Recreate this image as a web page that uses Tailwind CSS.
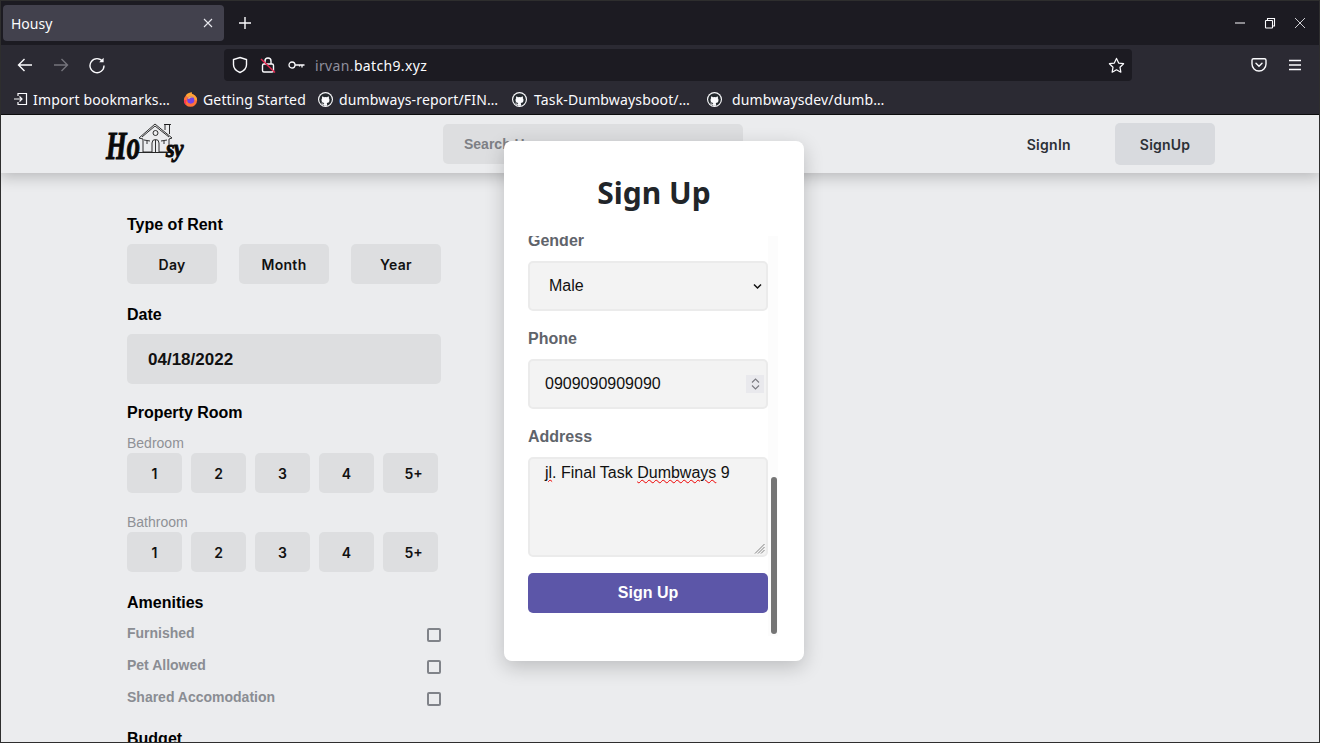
<!DOCTYPE html>
<html lang="en">
<head>
    <meta charset="UTF-8">
    <meta name="viewport" content="width=device-width, initial-scale=1.0">
    <title>Housy</title>
    <script src="https://cdn.jsdelivr.net/npm/@tailwindcss/browser@4"></script>
</head>
<body class="h-screen overflow-hidden bg-[#ebecee] font-['Liberation_Sans',sans-serif]">
    <div class="relative flex h-[743px] w-[1320px] flex-col overflow-hidden">

        <!-- tab bar -->
        <div class="flex h-[45px] shrink-0 items-center bg-[#1c1b22] pl-[3px] pr-[13px] pt-[1px] text-[#fbfbfe] font-['Noto_Sans',sans-serif]">
            <div class="flex h-[36px] w-[221px] items-center justify-between rounded-[4px] bg-[#42414d] pl-[8px] pr-[10px] text-[14px]">
                <span>Housy</span>
                <svg class="h-[12px] w-[12px]" viewBox="0 0 12 12" fill="none" stroke="#e8e8ee" stroke-width="1.1"><path d="M2 2l8 8M10 2l-8 8"/></svg>
            </div>
            <svg class="ml-[14px] h-[14px] w-[14px]" viewBox="0 0 14 14" fill="none" stroke="#fbfbfe" stroke-width="1.4"><path d="M7 1v12M1 7h12"/></svg>
            <div class="ml-auto flex items-center gap-[18px] pr-[1px]">
                <svg class="h-[12px] w-[12px]" viewBox="0 0 12 12" fill="none" stroke="#fbfbfe" stroke-width="1"><path d="M1 6h10"/></svg>
                <svg class="h-[12px] w-[12px]" viewBox="0 0 12 12" fill="none" stroke="#fbfbfe" stroke-width="1.1"><rect x="1.5" y="3.5" width="7" height="7.5" rx="0.6"/><path d="M3.5 3.5V1.5h7v7.5H8.5"/></svg>
                <svg class="h-[12px] w-[12px]" viewBox="0 0 12 12" fill="none" stroke="#fbfbfe" stroke-width="0.8"><path d="M1 1l10 10M11 1L1 11"/></svg>
            </div>
        </div>

        <!-- nav bar -->
        <div class="flex h-[44px] shrink-0 items-center bg-[#2b2a33] pb-[4px] pl-[16px] pr-[17px] text-[#fbfbfe] font-['Noto_Sans',sans-serif]">
            <svg class="h-[18px] w-[18px]" viewBox="0 0 18 18" fill="none" stroke="#fbfbfe" stroke-width="1.4"><path d="M16 9H2.5M8.5 3l-6 6 6 6"/></svg>
            <svg class="ml-[18px] h-[18px] w-[18px]" viewBox="0 0 18 18" fill="none" stroke="#75747c" stroke-width="1.4"><path d="M2 9h13.5M9.5 3l6 6-6 6"/></svg>
            <svg class="ml-[18px] h-[18px] w-[18px]" viewBox="0 0 18 18" fill="none" stroke="#fbfbfe" stroke-width="1.4"><path d="M14.7 5.6A7 7 0 1 0 16 9.5"/><path d="M15.6 1.8v4.4h-4.4z" fill="#fbfbfe" stroke="none"/></svg>

            <div class="ml-[118px] flex h-[32px] w-[908px] items-center rounded-[4px] bg-[#1c1b22] pl-[8px] pr-[7px]">
                <svg class="h-[18px] w-[16px]" viewBox="0 0 16 18" fill="none" stroke="#fbfbfe" stroke-width="1.4"><path d="M8 1.5l6.5 2v5.2c0 3.6-2.7 6.2-6.5 7.8-3.800-1.600-6.500-4.200-6.500-7.800V3.500z"/></svg>
                <svg class="ml-[12px] h-[18px] w-[16px]" viewBox="0 0 16 18" fill="none"><path d="M5 8V5a3 3 0 0 1 6 0v3" stroke="#fbfbfe" stroke-width="1.4"/><rect x="2.500" y="8" width="11" height="8" rx="1.500" stroke="#fbfbfe" stroke-width="1.400"/><path d="M1 3l14 13.500" stroke="#e22850" stroke-width="1.500"/></svg>
                <svg class="ml-[12px] h-[10px] w-[17px]" viewBox="0 0 17 10" fill="none" stroke="#fbfbfe" stroke-width="1.300"><circle cx="4" cy="5" r="3"/><path d="M7 5h9.500M14 5v2.500M11.500 5v1.500"/></svg>
                <span class="ml-[10px] text-[14px] tracking-[0.35px] text-[#8f8f9d]">irvan.<span class="text-[#fbfbfe]">batch9.xyz</span></span>
                <svg class="ml-auto h-[17px] w-[17px]" viewBox="0 0 18 18" fill="none" stroke="#fbfbfe" stroke-width="1.300" stroke-linejoin="round"><path d="M9 1.500l2.300 4.900 5.200.7-3.800 3.700.9 5.300L9 13.500 4.400 16.100l.9-5.300L1.500 7.100l5.200-.7z"/></svg>
            </div>

            <svg class="ml-[119px] h-[16px] w-[16px]" viewBox="0 0 16 16" fill="none" stroke="#fbfbfe" stroke-width="1.400"><path d="M2.500 1.800h11A1.500 1.500 0 0 1 15 3.300V7a7 7 0 0 1-14 0V3.300a1.500 1.500 0 0 1 1.500-1.500z"/><path d="M5 6.300l3 2.900 3-2.900" stroke-linecap="round"/></svg>
            <svg class="ml-[20px] h-[16px] w-[16px]" viewBox="0 0 16 16" fill="none" stroke="#fbfbfe" stroke-width="1.300"><path d="M2 3.500h12M2 8h12M2 12.500h12"/></svg>
        </div>

        <!-- bookmarks bar -->
        <div class="flex h-[26px] shrink-0 items-center border-b border-[#0c0c0d] bg-[#2b2a33] pb-[5px] pl-[14px] text-[14px] tracking-[0.15px] text-[#fbfbfe] font-['Noto_Sans',sans-serif]">
            <div class="flex w-[169px] items-center gap-[5px]">
                <svg class="h-[14px] w-[14px] shrink-0" viewBox="0 0 14 14" fill="none" stroke="#fbfbfe" stroke-width="1.200"><path d="M4 4V1.500h8.500v11H4V10M0 7h8M5.500 4.500L8 7 5.500 9.500"/></svg>
                <span class="whitespace-nowrap">Import bookmarks…</span>
            </div>
            <div class="flex w-[135px] items-center gap-[5px]">
                <svg class="h-[15px] w-[15px] shrink-0" viewBox="0 0 16 16"><circle cx="8" cy="8.800" r="7" fill="#ff7139"/><path d="M3 3.500C5 1 7.500.5 9.500 0c-.5 1 0 2 1 2.500 2 1 4.500 3 4.500 6.300H8z" fill="#ffa436"/><path d="M1 8.800c0 2.500 1 4.500 3 5.700-1-2-1-4-.2-6z" fill="#ff3750"/><circle cx="8.300" cy="8.600" r="3.800" fill="#7542e5"/><path d="M5 7c1-2.500 4.500-3 6-1-2-.5-4 0-4.500 1.500z" fill="#ffbd4f"/></svg>
                <span class="whitespace-nowrap">Getting Started</span>
            </div>
            <div class="flex w-[194px] items-center gap-[6px]">
                <svg class="h-[15px] w-[15px] shrink-0" viewBox="-1 -1 18 18"><circle cx="8" cy="8" r="9" fill="#fbfbfe"/><circle cx="8" cy="8" r="7.600" fill="#24292e"/><path fill="#fbfbfe" d="M9.900 15.500v-1.900c0-.7-.2-1.100-.5-1.400 1.700-.2 3.400-.8 3.400-3.700 0-.8-.3-1.500-.8-2 .1-.2.300-1 0-2 0 0-.6-.2-2.100.8a7 7 0 0 0-3.800 0C4.600 4.300 4 4.500 4 4.500c-.3 1-.1 1.800 0 2-.5.500-.8 1.200-.8 2 0 2.900 1.700 3.500 3.400 3.700-.2.200-.4.500-.5 1-.4.200-1.500.5-2.100-.6 0 0-.4-.7-1.100-.7 0 0-.7 0 0 .4 0 0 .5.200.8 1 0 0 .4 1.300 2.400.9v1.300z"/></svg>
                <span class="whitespace-nowrap">dumbways-report/FIN…</span>
            </div>
            <div class="flex w-[195px] items-center gap-[7px]">
                <svg class="h-[15px] w-[15px] shrink-0" viewBox="-1 -1 18 18"><circle cx="8" cy="8" r="9" fill="#fbfbfe"/><circle cx="8" cy="8" r="7.600" fill="#24292e"/><path fill="#fbfbfe" d="M9.900 15.500v-1.900c0-.7-.2-1.100-.5-1.400 1.700-.2 3.400-.8 3.400-3.700 0-.8-.3-1.500-.8-2 .1-.2.300-1 0-2 0 0-.6-.2-2.100.8a7 7 0 0 0-3.800 0C4.600 4.300 4 4.500 4 4.500c-.3 1-.1 1.800 0 2-.5.500-.8 1.200-.8 2 0 2.900 1.700 3.500 3.400 3.700-.2.200-.4.500-.5 1-.4.200-1.500.5-2.100-.6 0 0-.4-.7-1.100-.7 0 0-.7 0 0 .4 0 0 .5.200.8 1 0 0 .4 1.300 2.400.9v1.300z"/></svg>
                <span class="whitespace-nowrap">Task-Dumbwaysboot/…</span>
            </div>
            <div class="flex items-center gap-[10px]">
                <svg class="h-[15px] w-[15px] shrink-0" viewBox="-1 -1 18 18"><circle cx="8" cy="8" r="9" fill="#fbfbfe"/><circle cx="8" cy="8" r="7.600" fill="#24292e"/><path fill="#fbfbfe" d="M9.900 15.500v-1.900c0-.7-.2-1.100-.5-1.400 1.700-.2 3.400-.8 3.400-3.700 0-.8-.3-1.500-.8-2 .1-.2.300-1 0-2 0 0-.6-.2-2.100.8a7 7 0 0 0-3.800 0C4.600 4.300 4 4.500 4 4.500c-.3 1-.1 1.800 0 2-.5.500-.8 1.200-.8 2 0 2.900 1.700 3.500 3.400 3.700-.2.200-.4.500-.5 1-.4.200-1.500.5-2.100-.6 0 0-.4-.7-1.100-.7 0 0-.7 0 0 .4 0 0 .5.200.8 1 0 0 .4 1.300 2.400.9v1.300z"/></svg>
                <span class="whitespace-nowrap">dumbwaysdev/dumb…</span>
            </div>
        </div>

        <!-- page -->
        <main class="relative min-h-0 flex-1 overflow-hidden bg-[#ebecee]">
            <header class="relative flex h-[58px] items-center bg-[#ebecee] pl-[105px] shadow-[0_4px_14px_rgba(0,0,0,0.22)]">
                <div class="relative h-[44px] w-[81px] font-['Liberation_Serif',serif] font-bold italic leading-none text-[#0a0a0a] [-webkit-text-stroke:1px_#0a0a0a]">
                    <svg class="absolute left-[33px] top-[1px] h-[31px] w-[36px]" viewBox="0 0 36 31" fill="#ebecee" stroke="#1a1a1a" stroke-width="0.900"><path d="M1 15L17 1l17 14-3 1v13H5V16z"/><path d="M4 14L17 3l14 11"/><path d="M27 7V1.500h4.500V11"/><path d="M26 1.500h7"/><path d="M0 29.500h36"/><circle cx="17.500" cy="10" r="2.500"/><path d="M14 29V20a3.500 3.500 0 0 1 7 0v9M17.500 17v12M6 17l6 1M29 17l-6 1M9 18v3M26 18v3"/></svg>
                    <span class="absolute left-[1px] top-[4px] origin-left scale-x-[0.68] text-[39px]">Ho</span>
                    <span class="absolute left-[61px] top-[14px] origin-left scale-x-[0.85] text-[26px] tracking-[-1px]">sy</span>
                </div>
                <div class="ml-[257px] flex h-[40px] w-[300px] items-center rounded-[5px] bg-[#dddee0] pl-[21px] text-[14px] font-bold text-[#7d8085]">Search Housy</div>
                <span class="ml-auto text-[14px] font-semibold tracking-[0.3px] text-[#2c3036] font-['Inter',sans-serif]">SignIn</span>
                <div class="ml-[44px] mr-[105px] flex h-[42px] w-[100px] items-center justify-center rounded-[5px] bg-[#d8dade] text-[14px] font-semibold tracking-[0.2px] text-[#2c3036] font-['Inter',sans-serif]">SignUp</div>
            </header>

            <!-- filter sidebar -->
            <aside class="ml-[127px] w-[314px] pt-[40px] text-black">
                <h2 class="text-[16px] font-bold leading-6">Type of Rent</h2>
                <div class="mt-[7px] flex gap-[22px]">
                    <div class="flex h-[40px] w-[90px] items-center justify-center rounded-[5px] bg-[#dddee0] text-[14px] font-semibold tracking-[0.3px] text-[#111] font-['Inter',sans-serif]">Day</div>
                    <div class="flex h-[40px] w-[90px] items-center justify-center rounded-[5px] bg-[#dddee0] text-[14px] font-semibold tracking-[0.3px] text-[#111] font-['Inter',sans-serif]">Month</div>
                    <div class="flex h-[40px] w-[90px] items-center justify-center rounded-[5px] bg-[#dddee0] text-[14px] font-semibold tracking-[0.3px] text-[#111] font-['Inter',sans-serif]">Year</div>
                </div>

                <h2 class="mt-[19px] text-[16px] font-bold leading-6">Date</h2>
                <div class="mt-[7px] flex h-[50px] items-center rounded-[5px] bg-[#dddee0] pl-[21px] pt-[2px] text-[17px] font-bold text-[#111]">04/18/2022</div>

                <h2 class="mt-[17px] text-[16px] font-bold leading-6">Property Room</h2>
                <p class="mt-[8px] text-[14px] leading-5 text-[#8f9196]">Bedroom</p>
                <div class="flex gap-[9px]">
                    <div class="flex h-[40px] w-[55px] items-center justify-center rounded-[5px] bg-[#dddee0] text-[14px] font-semibold text-[#111] font-['Inter',sans-serif]">1</div>
                    <div class="flex h-[40px] w-[55px] items-center justify-center rounded-[5px] bg-[#dddee0] text-[14px] font-semibold text-[#111] font-['Inter',sans-serif]">2</div>
                    <div class="flex h-[40px] w-[55px] items-center justify-center rounded-[5px] bg-[#dddee0] text-[14px] font-semibold text-[#111] font-['Inter',sans-serif]">3</div>
                    <div class="flex h-[40px] w-[55px] items-center justify-center rounded-[5px] bg-[#dddee0] text-[14px] font-semibold text-[#111] font-['Inter',sans-serif]">4</div>
                    <div class="flex h-[40px] w-[55px] items-center justify-center rounded-[5px] bg-[#dddee0] pl-[6px] text-[14px] font-semibold text-[#111] font-['Inter',sans-serif]">5+</div>
                </div>
                <p class="mt-[19px] text-[14px] leading-5 text-[#8f9196]">Bathroom</p>
                <div class="flex gap-[9px]">
                    <div class="flex h-[40px] w-[55px] items-center justify-center rounded-[5px] bg-[#dddee0] text-[14px] font-semibold text-[#111] font-['Inter',sans-serif]">1</div>
                    <div class="flex h-[40px] w-[55px] items-center justify-center rounded-[5px] bg-[#dddee0] text-[14px] font-semibold text-[#111] font-['Inter',sans-serif]">2</div>
                    <div class="flex h-[40px] w-[55px] items-center justify-center rounded-[5px] bg-[#dddee0] text-[14px] font-semibold text-[#111] font-['Inter',sans-serif]">3</div>
                    <div class="flex h-[40px] w-[55px] items-center justify-center rounded-[5px] bg-[#dddee0] text-[14px] font-semibold text-[#111] font-['Inter',sans-serif]">4</div>
                    <div class="flex h-[40px] w-[55px] items-center justify-center rounded-[5px] bg-[#dddee0] pl-[6px] text-[14px] font-semibold text-[#111] font-['Inter',sans-serif]">5+</div>
                </div>

                <h2 class="mt-[19px] text-[16px] font-bold leading-6">Amenities</h2>
                <div class="mt-[7px] flex flex-col gap-[12px] text-[14px] font-bold text-[#8a8d93]">
                    <div class="flex h-5 justify-between leading-[22px]"><span>Furnished</span><span class="mt-[6px] h-[14px] w-[14px] rounded-[2px] border-2 border-[#808389]"></span></div>
                    <div class="flex h-5 justify-between leading-[22px]"><span>Pet Allowed</span><span class="mt-[6px] h-[14px] w-[14px] rounded-[2px] border-2 border-[#808389]"></span></div>
                    <div class="flex h-5 justify-between leading-[22px]"><span>Shared Accomodation</span><span class="mt-[6px] h-[14px] w-[14px] rounded-[2px] border-2 border-[#808389]"></span></div>
                </div>
                <h2 class="mt-[21px] text-[16px] font-bold leading-6">Budget</h2>
            </aside>

            <!-- sign up modal -->
            <div class="absolute left-[504px] top-[26px] h-[520px] w-[300px] rounded-[8px] bg-white pl-[24px] pt-[34px] shadow-[0_6px_20px_rgba(0,0,0,0.2)]">
                <h1 class="-ml-[24px] text-center text-[30px] font-bold leading-[36px] text-[#212529] font-['Noto_Sans',sans-serif]">Sign Up</h1>
                <div class="relative mt-[25px] h-[400px] w-[250px] overflow-hidden">
                    <div class="absolute right-0 top-0 h-full w-[10px] bg-[#fcfcfc]"></div>
                    <form class="relative -mt-[7px] w-[240px]">
                        <label class="block text-[16px] font-bold leading-6 text-[#5f646b]">Gender</label>
                        <div class="relative mt-[8px]">
                            <select class="h-[50px] w-full appearance-none rounded-[5px] border-2 border-[#ebebeb] bg-[#f3f3f3] pl-[19px] text-[16px] text-[#111]"><option>Male</option></select>
                            <svg class="absolute right-[6px] top-[22px] h-[7px] w-[9px]" viewBox="0 0 9 7" fill="none" stroke="#111" stroke-width="1.500"><path d="M1 1.500l3.500 3.500L8 1.500"/></svg>
                        </div>

                        <label class="mt-[16px] block text-[16px] font-bold leading-6 text-[#5f646b]">Phone</label>
                        <div class="relative mt-[8px]">
                            <input type="text" value="0909090909090" class="h-[50px] w-full rounded-[5px] border-2 border-[#ebebeb] bg-[#f3f3f3] pl-[15px] text-[16px] text-[#111]">
                            <div class="absolute right-[4px] top-[16px] flex h-[18px] w-[18px] flex-col items-center justify-center gap-[2px] bg-[#e9e9ed]">
                                <svg class="h-[5px] w-[9px]" viewBox="0 0 9 5" fill="none" stroke="#7a7a80" stroke-width="1.100"><path d="M1 4.500l3.500-3.500L8 4.500"/></svg>
                                <svg class="h-[5px] w-[9px]" viewBox="0 0 9 5" fill="none" stroke="#7a7a80" stroke-width="1.100"><path d="M1 .5L4.500 4 8 .5"/></svg>
                            </div>
                        </div>

                        <label class="mt-[16px] block text-[16px] font-bold leading-6 text-[#5f646b]">Address</label>
                        <div class="relative mt-[8px] h-[100px] rounded-[5px] border-2 border-[#ebebeb] bg-[#f3f3f3] pl-[15px] pt-[4px] text-[16px] leading-[20px] text-[#111]">
                            <span class="underline decoration-[#e00] decoration-wavy decoration-1">jl</span>. Final Task <span class="underline decoration-[#e00] decoration-wavy decoration-1">Dumbways</span> 9
                            <svg class="absolute bottom-[1px] right-[1px] h-[11px] w-[11px]" viewBox="0 0 11 11" fill="none" stroke="#777" stroke-width="0.900"><path d="M10.500 1L1 10.500M10.500 4L4 10.500M10.500 7L7 10.500"/></svg>
                        </div>

                        <button type="button" class="mt-[16px] h-[40px] w-full rounded-[5px] bg-[#5c56a8] text-[16px] font-bold text-white">Sign Up</button>
                    </form>
                    <div class="absolute left-[243px] top-[241px] h-[157px] w-[6px] rounded-[3px] bg-[#757575]"></div>
                </div>
            </div>
        </main>

        <!-- window edge -->
        <div class="pointer-events-none absolute inset-0 border border-[#2e2e2e]"></div>
    </div>
</body>
</html>
